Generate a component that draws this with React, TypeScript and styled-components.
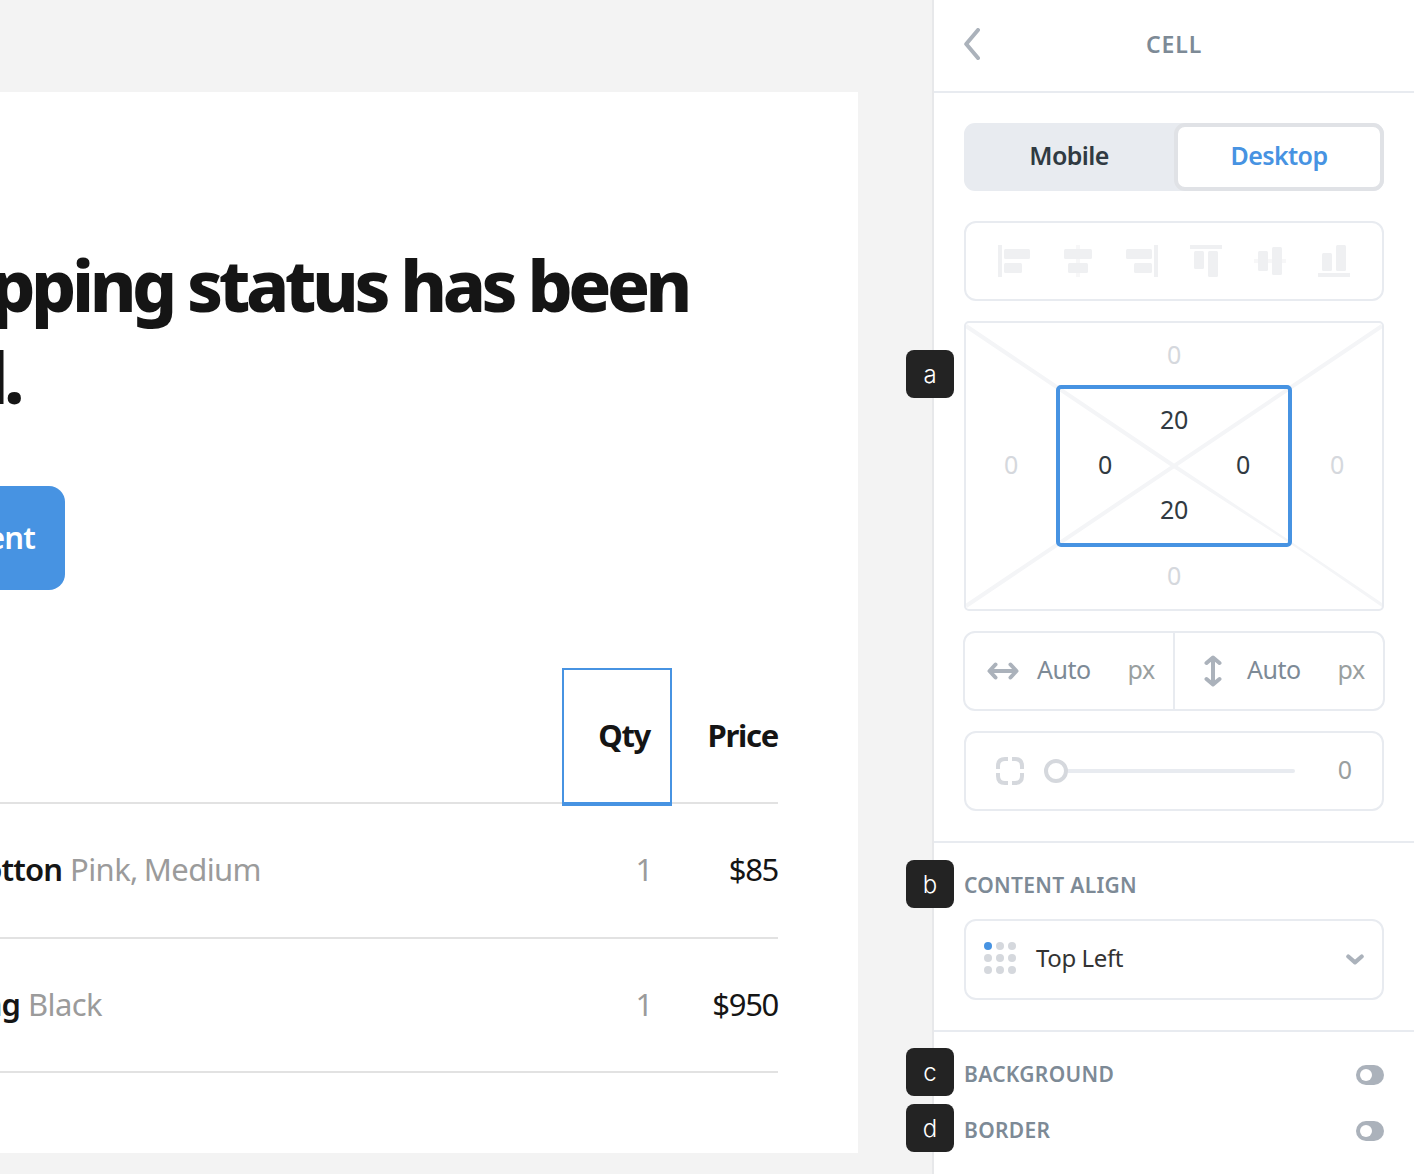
import React, { memo } from 'react'
import styled, { createGlobalStyle, css } from 'styled-components'

const colors = {
  blue: '#4793e2',
  ink: '#151515',
  slate: '#7d8a96',
  dark: '#303a42',
  line: '#e8ebf0',
  icon: '#abb2bb',
  faint: '#d5d8dd',
  disabled: '#eff0f2',
}

const GlobalStyle = createGlobalStyle`
  * {
    box-sizing: border-box;
  }
  body {
    margin: 0;
    overflow: hidden;
    background: #f3f3f3;
    font-family: 'Noto Sans', 'Open Sans', sans-serif;
  }
`

// keeps glyphs optically centred inside their boxes
const lifted = css`
  padding-bottom: 0.085em;
  white-space: nowrap;
`
const raised = css`
  padding-bottom: 0.15em;
  white-space: nowrap;
`

const Layout = styled.div`
  display: flex;
  width: 1414px;
  height: 1174px;
  overflow: hidden;
`

/* Canvas */

const Canvas = styled.main`
  width: 932px;
  padding-top: 92px;
  background: #f3f3f3;
`
const Email = styled.article`
  width: 858px;
  height: 1061px;
  padding: 147px 80px 0 0;
  background: #fff;
  color: ${colors.ink};
`
const Title = styled.h1`
  margin: 0;
  font-size: 71px;
  font-weight: 800;
  line-height: 92px;
`
const TitleLine = styled.div<{ $end: number }>`
  display: flex;
  justify-content: flex-end;
  width: ${(p) => p.$end}px;
  letter-spacing: -4.4px;
  white-space: nowrap;
`
const Button = styled.div`
  display: flex;
  align-items: center;
  justify-content: flex-end;
  width: 65px;
  height: 104px;
  margin-top: 63px;
  padding-right: 30px;
  border-radius: 0 16px 16px 0;
  background: ${colors.blue};
  color: #fff;
  font-size: 31px;
  font-weight: 600;
  letter-spacing: -0.8px;
  span {
    ${lifted}
  }
`
const Table = styled.div`
  margin-top: 80px;
  font-size: 31px;
`
const Row = styled.div<{ $height: number }>`
  display: flex;
  height: ${(p) => p.$height}px;
  border-bottom: 2px solid #e2e2e2;
`
const ItemCell = styled.div`
  width: 562px;
`
const Item = styled.div<{ $end: number }>`
  display: flex;
  align-items: center;
  justify-content: flex-end;
  gap: 8px;
  width: ${(p) => p.$end}px;
  height: 100%;
  span, strong {
    ${lifted}
  }
`
const ItemName = styled.strong`
  font-weight: 600;
  letter-spacing: -0.9px;
`
const Variant = styled.span`
  color: #9b9b9b;
  letter-spacing: -0.6px;
  word-spacing: -1.5px;
`
const Cell = styled.div<{ $width: number; $bold?: boolean; $muted?: boolean }>`
  position: relative;
  display: flex;
  align-items: center;
  justify-content: flex-end;
  width: ${(p) => p.$width}px;
  color: ${(p) => (p.$muted ? '#9b9b9b' : colors.ink)};
  font-weight: ${(p) => (p.$bold ? 700 : 400)};
  letter-spacing: -1.3px;
  span {
    ${lifted}
  }
`
const QtyCell = styled(Cell)`
  padding-right: ${(p) => (p.$bold ? 22 : 20)}px;
`
const Selection = styled.div`
  position: absolute;
  top: -2px;
  right: 0;
  bottom: -4px;
  left: 0;
  border: 2px solid ${colors.blue};
  border-bottom-width: 4px;
`

/* Inspector */

const Panel = styled.aside`
  width: 482px;
  border-left: 2px solid #e7e8ea;
  background: #fff;
`
const Header = styled.header`
  display: grid;
  grid-template-columns: 16px 1fr 16px;
  align-items: center;
  height: 93px;
  padding: 0 30px 3px;
  border-bottom: 2px solid ${colors.line};
`
const Heading = styled.div`
  color: ${colors.slate};
  font-size: 23px;
  font-weight: 600;
  letter-spacing: 0.9px;
  text-align: center;
`
const Section = styled.section<{ $top: number; $height?: number; $gap?: number }>`
  position: relative;
  display: flex;
  flex-direction: column;
  gap: ${(p) => p.$gap || 0}px;
  height: ${(p) => (p.$height ? `${p.$height}px` : 'auto')};
  padding: ${(p) => p.$top}px 30px 0;
  border-bottom: 2px solid ${colors.line};
  &:last-child {
    border-bottom: 0;
  }
`
const Marker = styled.div<{ $top: number }>`
  position: absolute;
  z-index: 1;
  top: ${(p) => p.$top}px;
  left: -28px;
  width: 48px;
  height: 48px;
  border-radius: 8px;
  background: #232323;
  color: #fff;
  font: 300 24px/50px Inter, sans-serif;
  text-align: center;
`
const Tabs = styled.div`
  display: grid;
  grid-template-columns: 1fr 1fr;
  height: 68px;
  margin-bottom: 10px;
  border-radius: 11px;
  background: #e8ebf0;
`
const Tab = styled.div<{ $active?: boolean }>`
  display: flex;
  align-items: center;
  justify-content: center;
  border: 4px solid ${(p) => (p.$active ? '#e0e2e6' : 'transparent')};
  border-radius: 11px;
  background: ${(p) => (p.$active ? '#fff' : 'transparent')};
  color: ${(p) => (p.$active ? colors.blue : colors.dark)};
  font-size: 25px;
  font-weight: 600;
  letter-spacing: -0.6px;
  span {
    ${raised}
  }
`
const Box = styled.div`
  display: flex;
  align-items: center;
  height: 80px;
  border: 2px solid ${colors.line};
  border-radius: 12px;
`
const AlignBox = styled(Box)`
  justify-content: space-between;
  padding: 0 32px;
`
const Spacing = styled.div`
  position: relative;
  display: grid;
  grid-template: 65px 156px 65px / 90px 236px 90px;
  place-items: center;
  height: 290px;
  border: 2px solid ${colors.line};
  border-radius: 5px;
`
const Diagonals = styled.svg`
  position: absolute;
  top: 0;
  left: 0;
`
const Padding = styled.div`
  position: relative;
  grid-area: 2 / 2;
  display: grid;
  grid-template: 64px 26px 64px / 90px 48px 90px;
  place-items: center;
  width: 236px;
  height: 162px;
  border: 4px solid ${colors.blue};
  border-radius: 5px;
`
const Value = styled.span<{ $area: string; $muted?: boolean }>`
  ${raised}
  grid-area: ${(p) => p.$area};
  color: ${(p) => (p.$muted ? colors.faint : colors.dark)};
  font-size: 25px;
  line-height: 26px;
  letter-spacing: -0.3px;
`
const SizeBox = styled(Box)`
  margin: 0 -1px;
`
const Size = styled.div`
  display: flex;
  flex: 1;
  align-items: center;
  height: 100%;
  padding: 0 18px 0 22px;
  font-size: 25px;
  & + & {
    border-left: 2px solid ${colors.line};
  }
`
const SizeIcon = styled.div`
  display: flex;
  justify-content: center;
  width: 32px;
`
const SizeValue = styled.span`
  ${raised}
  flex: 1;
  margin-left: 18px;
  color: ${colors.slate};
  letter-spacing: -0.5px;
`
const Unit = styled.span`
  ${raised}
  color: #9a9f9f;
  letter-spacing: -0.3px;
`
const RadiusBox = styled(Box)`
  padding: 0 30px;
`
const Knob = styled.div`
  width: 24px;
  height: 24px;
  margin-left: 20px;
  border: 4px solid ${colors.faint};
  border-radius: 50%;
`
const Track = styled.div`
  flex: 1;
  height: 4px;
  margin-right: 43px;
  border-radius: 0 2px 2px 0;
  background: ${colors.line};
`
const RadiusValue = styled.span`
  ${raised}
  color: #9a9f9f;
  font-size: 25px;
`
const LabelRow = styled.div`
  display: flex;
  align-items: center;
  justify-content: space-between;
  height: 28px;
`
const Label = styled.div`
  ${lifted}
  color: ${colors.slate};
  font-size: 21px;
  font-weight: 650;
  line-height: 28px;
  letter-spacing: 0.3px;
`
const Select = styled(Box)`
  height: 81px;
  margin-top: 19px;
  padding: 0 18px;
  color: #333;
  font-size: 24px;
`
const SelectText = styled.span`
  ${raised}
  flex: 1;
  margin-left: 20px;
  letter-spacing: -0.4px;
`
const Dots = styled.div`
  display: grid;
  grid-template-columns: repeat(3, 8px);
  gap: 4px;
  margin-bottom: 3px;
`
const Dot = styled.i<{ $on: boolean }>`
  height: 8px;
  border-radius: 50%;
  background: ${(p) => (p.$on ? colors.blue : colors.faint)};
`
const Toggle = styled.div`
  width: 28px;
  height: 20px;
  padding: 4px;
  border-radius: 10px;
  background: ${colors.icon};
  &::before {
    content: '';
    display: block;
    width: 12px;
    height: 12px;
    border-radius: 50%;
    background: #fff;
  }
`

// x, y, width, height of the two blocks, then the guide they snap to
const alignIcons = [
  { name: 'left', blocks: [[6, 4, 26, 10], [6, 18, 18, 10]], guide: [0, 0, 4, 32] },
  { name: 'center', blocks: [[2, 4, 28, 10], [6, 18, 20, 10]], guide: [14, 0, 4, 32], soft: true },
  { name: 'right', blocks: [[0, 4, 26, 10], [8, 18, 18, 10]], guide: [28, 0, 4, 32] },
  { name: 'top', blocks: [[4, 6, 10, 18], [18, 6, 10, 26]], guide: [0, 0, 32, 4] },
  { name: 'middle', blocks: [[4, 6, 10, 20], [18, 2, 10, 28]], guide: [0, 14, 32, 4], soft: true },
  { name: 'bottom', blocks: [[4, 8, 10, 18], [18, 0, 10, 26]], guide: [0, 28, 32, 4] },
]

const AlignIcon = ({ blocks, guide, soft }: { blocks: number[][]; guide: number[]; soft?: boolean }) => (
  <svg width="32" height="32" fill={colors.disabled}>
    <rect x={guide[0]} y={guide[1]} width={guide[2]} height={guide[3]} fill={soft ? '#f7f7f8' : colors.disabled} />
    {blocks.map(([x, y, w, h]) => (
      <rect key={`${x}-${y}`} x={x} y={y} width={w} height={h} rx="1.5" />
    ))}
  </svg>
)

const BackIcon = () => (
  <svg width="16" height="32" viewBox="0 0 16 32" fill="none" stroke={colors.icon} strokeWidth="4" strokeLinecap="round" strokeLinejoin="round">
    <path d="M14 2L2.2 16L14 30" />
  </svg>
)

const WidthIcon = () => (
  <svg width="32" height="18" fill="none" stroke={colors.icon} strokeWidth="4" strokeLinecap="round" strokeLinejoin="round">
    <path d="M8.5 2.5L2.5 9L8.5 15.5M23.5 2.5L29.5 9L23.5 15.5M4 9H28" />
  </svg>
)

const HeightIcon = () => (
  <svg width="18" height="32" fill="none" stroke={colors.icon} strokeWidth="4" strokeLinecap="round" strokeLinejoin="round">
    <path d="M2.5 8L9 2.5L15.5 8M2.5 24L9 29.5L15.5 24M9 4V28" />
  </svg>
)

const CornersIcon = () => (
  <svg width="28" height="28" fill="none" stroke={colors.faint} strokeWidth="4">
    <path d="M2 12V9Q2 2 9 2H12M16 2H19Q26 2 26 9V12M26 16V19Q26 26 19 26H16M12 26H9Q2 26 2 19V16" />
  </svg>
)

const ChevronIcon = () => (
  <svg width="18" height="11" fill="none" stroke={colors.icon} strokeWidth="4.2" strokeLinecap="round" strokeLinejoin="round">
    <path d="M2.3 2.5L9 8.3L15.7 2.5" />
  </svg>
)

const items = [
  { name: 'otton', variant: 'Pink, Medium', qty: 1, price: '$85', end: 261, height: 135 },
  { name: 'ag', variant: 'Black', qty: 1, price: '$950', end: 102, height: 134 },
]

const EmailPreview = memo(() => (
  <Canvas>
    <Email>
      <Title>
        <TitleLine $end={688}>pping status has been</TitleLine>
        <TitleLine $end={20}>d.</TitleLine>
      </Title>
      <Button><span>ent</span></Button>
      <Table>
        <Row $height={134}>
          <ItemCell />
          <QtyCell $width={110} $bold>
            <span>Qty</span>
            <Selection />
          </QtyCell>
          <Cell $width={106} $bold><span>Price</span></Cell>
        </Row>
        {items.map((item) => (
          <Row key={item.name} $height={item.height}>
            <ItemCell>
              <Item $end={item.end}>
                <ItemName>{item.name}</ItemName>
                <Variant>{item.variant}</Variant>
              </Item>
            </ItemCell>
            <QtyCell $width={110} $muted><span>{item.qty}</span></QtyCell>
            <Cell $width={106}><span>{item.price}</span></Cell>
          </Row>
        ))}
      </Table>
    </Email>
  </Canvas>
))

const Inspector = memo(() => (
  <Panel>
    <Header>
      <BackIcon />
      <Heading>CELL</Heading>
    </Header>
    <Section $top={30} $height={750} $gap={20}>
      <Marker $top={257}>a</Marker>
      <Tabs>
        <Tab><span>Mobile</span></Tab>
        <Tab $active><span>Desktop</span></Tab>
      </Tabs>
      <AlignBox>
        {alignIcons.map(({ name, ...icon }) => <AlignIcon key={name} {...icon} />)}
      </AlignBox>
      <Spacing>
        <Diagonals width="416" height="286" fill="none" stroke="#f4f5f7" strokeWidth="4">
          <path d="M0 3L208 143M416 3L0 283" />
          <path d="M207 144.7L209 141.3L325 218.5L416 280V284L324 220.5Z" fill="#f4f5f7" stroke="none" />
        </Diagonals>
        <Value $area="1 / 2" $muted>0</Value>
        <Value $area="2 / 1" $muted>0</Value>
        <Padding>
          <Value $area="1 / 2">20</Value>
          <Value $area="2 / 1">0</Value>
          <Value $area="2 / 3">0</Value>
          <Value $area="3 / 2">20</Value>
        </Padding>
        <Value $area="2 / 3" $muted>0</Value>
        <Value $area="3 / 2" $muted>0</Value>
      </Spacing>
      <SizeBox>
        <Size>
          <SizeIcon><WidthIcon /></SizeIcon>
          <SizeValue>Auto</SizeValue>
          <Unit>px</Unit>
        </Size>
        <Size>
          <SizeIcon><HeightIcon /></SizeIcon>
          <SizeValue>Auto</SizeValue>
          <Unit>px</Unit>
        </Size>
      </SizeBox>
      <RadiusBox>
        <CornersIcon />
        <Knob />
        <Track />
        <RadiusValue>0</RadiusValue>
      </RadiusBox>
    </Section>
    <Section $top={29} $height={189}>
      <Marker $top={17}>b</Marker>
      <LabelRow>
        <Label>CONTENT ALIGN</Label>
      </LabelRow>
      <Select>
        <Dots>
          {Array.from({ length: 9 }, (_, i) => <Dot key={i} $on={i === 0} />)}
        </Dots>
        <SelectText>Top Left</SelectText>
        <ChevronIcon />
      </Select>
    </Section>
    <Section $top={29} $gap={28}>
      <Marker $top={16}>c</Marker>
      <Marker $top={72}>d</Marker>
      <LabelRow>
        <Label>BACKGROUND</Label>
        <Toggle />
      </LabelRow>
      <LabelRow>
        <Label>BORDER</Label>
        <Toggle />
      </LabelRow>
    </Section>
  </Panel>
))

export default function App() {
  return (
    <>
      <GlobalStyle />
      <Layout>
        <EmailPreview />
        <Inspector />
      </Layout>
    </>
  )
}
